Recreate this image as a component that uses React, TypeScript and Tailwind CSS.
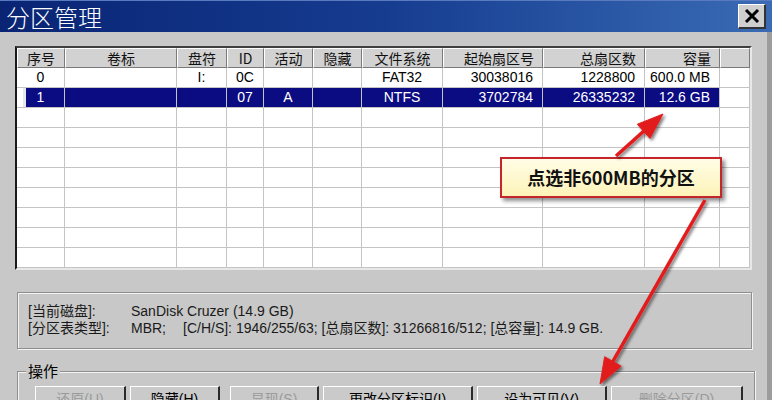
import React from "react";

const cols = [
  { w: 48, h: "序号", a: "center" },
  { w: 112, h: "卷标", a: "center" },
  { w: 50, h: "盘符", a: "center" },
  { w: 37, h: "ID", a: "center" },
  { w: 49, h: "活动", a: "center" },
  { w: 49, h: "隐藏", a: "center" },
  { w: 81, h: "文件系统", a: "center" },
  { w: 100, h: "起始扇区号", a: "right" },
  { w: 102, h: "总扇区数", a: "right" },
  { w: 75, h: "容量", a: "right" },
  { w: 30, h: "", a: "center" },
];

const rows: string[][] = [
  ["0", "", "I:", "0C", "", "", "FAT32", "30038016", "1228800", "600.0 MB", ""],
  ["1", "", "", "07", "A", "", "NTFS", "3702784", "26335232", "12.6 GB", ""],
];

const FONT = { fontFamily: '"Liberation Sans", "Noto Sans CJK SC", sans-serif' };

function Cell({ w, a, children, sel, first }: { w: number; a: string; children?: React.ReactNode; sel?: boolean; first?: boolean }) {
  const align = a === "right" ? "justify-end pr-[9px]" : "justify-center";
  return (
    <div
      className={`h-[20px] shrink-0 flex items-center border-r border-b border-[#c4c4c4] ${align} ${sel ? "bg-[#0b0b82] text-white" : "bg-white text-black"} relative`}
      style={{ width: w }}
    >
      {first && sel ? <div className="absolute left-0 top-0 bottom-0 w-[9px] bg-white border-r-[3px] border-[#e6e6ee]" /> : null}
      <span className="relative">{children}</span>
    </div>
  );
}

function arrow(sx: number, sy: number, tx: number, ty: number) {
  const dx = tx - sx, dy = ty - sy;
  const len = Math.hypot(dx, dy);
  const ux = dx / len, uy = dy / len;
  const L = 26, W = 19;
  const bx = tx - ux * L, by = ty - uy * L;
  const nx = -uy, ny = ux;
  const pts = `${tx},${ty} ${bx + nx * W / 2},${by + ny * W / 2} ${bx - nx * W / 2},${by - ny * W / 2}`;
  return { line: { x1: sx, y1: sy, x2: bx + ux * 4, y2: by + uy * 4 }, pts };
}

function Btn({ w, label, disabled }: { w: number; label: string; disabled?: boolean }) {
  return (
    <div
      className="h-[26px] shrink-0 bg-[#cacaca] border-t border-l border-t-white border-l-white border-r-2 border-b-2 border-r-[#2a2a2a] border-b-[#2a2a2a] flex justify-center pt-[5px]"
      style={{ width: w }}
    >
      <span className={`text-[14px] leading-none ${disabled ? "text-[#9a9a9a]" : "text-black"}`}>{label}</span>
    </div>
  );
}

export default function App() {
  const a1 = arrow(616, 156, 663, 114);
  const a2 = arrow(705, 200, 600, 384);
  return (
    <div className="w-[772px] h-[400px] overflow-hidden relative bg-[#c8c8c8]" style={FONT}>
      {/* title bar */}
      <div className="h-[32px] flex items-center justify-between bg-linear-to-r from-[#0a2474] via-[#163c90] to-[#3a6bb4] border-t border-[#5a7ac0] pl-[6px] pr-[6px]">
        <span className="text-white text-[24px] leading-none tracking-[0px]" style={{ fontFamily: '"Noto Sans CJK SC", sans-serif', fontWeight: 300 }}>
          分区管理
        </span>
        <div className="w-[28px] h-[25px] bg-[#cfcfcf] border-t border-l border-white border-r-2 border-b-2 border-r-[#333] border-b-[#333] flex items-center justify-center">
          <svg width="16" height="14" viewBox="0 0 16 14">
            <path d="M2 1 L14 13 M14 1 L2 13" stroke="#000" strokeWidth="3" />
          </svg>
        </div>
      </div>

      {/* body */}
      <div className="border-r-[5px] border-[#9c9c9c] h-[368px] pt-[14px]">
        {/* table */}
        <div className="ml-[15px] w-[737px] h-[224px] border-t-2 border-l-2 border-t-[#404040] border-l-[#1a1a1a] border-r-2 border-b-2 border-r-[#e8e8e8] border-b-[#e8e8e8] bg-white overflow-hidden text-[14px]">
          <div className="flex">
            {cols.map((c, i) => (
              <div
                key={i}
                className={`h-[20px] shrink-0 flex items-center bg-[#d2d2d2] border-t border-l border-t-white border-l-white border-r border-b border-r-[#7a7a7a] border-b-[#7a7a7a] text-[#111] ${c.a === "right" ? "justify-end pr-[8px]" : "justify-center"}`}
                style={{ width: c.w, fontFamily: '"Noto Sans CJK SC", sans-serif', fontSize: 14 }}
              >
                {c.h}
              </div>
            ))}
          </div>
          {rows.map((r, ri) => (
            <div key={ri} className="flex">
              {cols.map((c, i) => (
                <Cell key={i} w={c.w} a={c.a} sel={ri === 1 && i < 10} first={i === 0}>
                  {r[i]}
                </Cell>
              ))}
            </div>
          ))}
          {Array.from({ length: 8 }).map((_, ri) => (
            <div key={ri} className="flex">
              {cols.map((c, i) => (
                <Cell key={i} w={c.w} a={c.a} />
              ))}
            </div>
          ))}
        </div>

        {/* info panel */}
        <div className="ml-[17px] mt-[22px] w-[735px] h-[57px] border border-[#8e8e8e] shadow-[inset_1px_1px_0_#f4f4f4,1px_1px_0_#f4f4f4] pl-[10px] pt-[10px] text-[14px] leading-[17px] text-[#1a1a1a]">
          <div className="flex">
            <span className="w-[103px]">[当前磁盘]:</span>
            <span>SanDisk Cruzer (14.9 GB)</span>
          </div>
          <div className="flex">
            <span className="w-[103px]">[分区表类型]:</span>
            <span className="w-[52px]">MBR;</span>
            <span>[C/H/S]: 1946/255/63; [总扇区数]: 31266816/512; [总容量]: 14.9 GB.</span>
          </div>
        </div>

        {/* group box */}
        <div className="ml-[17px] mt-[22px] w-[738px] h-[40px] border-t border-l border-r border-[#8e8e8e] shadow-[inset_1px_1px_0_#f4f4f4,1px_0_0_#f4f4f4] relative">
          <span className="absolute left-[8px] top-[-10px] bg-[#c8c8c8] px-[2px] text-[15px] leading-[18px] text-black" style={{ fontFamily: '"Noto Sans CJK SC", sans-serif' }}>
            操作
          </span>
          <div className="flex ml-[17px] mt-[14px] gap-[4px]">
            <Btn w={91} label="还原(U)" disabled />
            <Btn w={90} label="隐藏(H)" />
            <div className="w-[2px]" />
            <Btn w={89} label="显现(S)" disabled />
            <Btn w={150} label="更改分区标识(I)" />
            <Btn w={130} label="设为可见(V)" />
            <Btn w={132} label="删除分区(D)" disabled />
          </div>
        </div>
      </div>

      {/* callout */}
      <div className="absolute left-[500px] top-[157px] w-[222px] h-[41px] bg-linear-to-b from-[#fffde6] to-[#fdf3b8] border-2 border-[#c4262c] shadow-[3px_3px_4px_rgba(0,0,0,0.45)] flex items-center justify-center">
        <span className="text-[18px] font-bold text-[#111]" style={{ fontFamily: '"Noto Sans CJK SC", sans-serif' }}>
          点选非600MB的分区
        </span>
      </div>

      {/* arrows */}
      <svg className="absolute left-0 top-0 pointer-events-none" width="772" height="400">
        <defs>
          <filter id="sh" x="-20%" y="-20%" width="140%" height="140%">
            <feDropShadow dx="2" dy="2" stdDeviation="1.5" floodColor="#000" floodOpacity="0.5" />
          </filter>
        </defs>
        <g filter="url(#sh)" fill="#e21f1f" stroke="#e21f1f">
          <line {...a1.line} strokeWidth="3.5" />
          <polygon points={a1.pts} strokeWidth="1" />
          <line {...a2.line} strokeWidth="3.5" />
          <polygon points={a2.pts} strokeWidth="1" />
        </g>
      </svg>
    </div>
  );
}
